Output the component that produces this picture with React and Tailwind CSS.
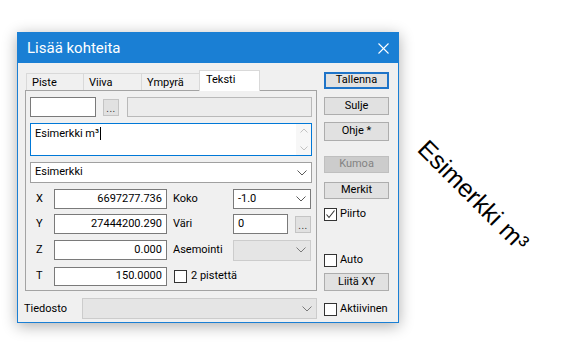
import React from "react";

const Chevron = ({ color = "#5a5a5a" }) => (
  <svg width="10" height="6" viewBox="0 0 10 6" className="shrink-0">
    <polyline points="0.5,0.5 5,5 9.5,0.5" fill="none" stroke={color} strokeWidth="1" />
  </svg>
);

const Check = ({ checked }) => (
  <div className="w-[13px] h-[13px] border border-[#333333] bg-white flex items-center justify-center shrink-0">
    {checked && (
      <svg width="11" height="11" viewBox="0 0 11 11">
        <polyline points="1.5,5.5 4,8.5 9.5,1.5" fill="none" stroke="#333333" strokeWidth="1.1" />
      </svg>
    )}
  </div>
);

const Btn = ({ children, className = "", disabled = false, primary = false }) => (
  <div
    className={
      "w-[65px] flex items-center justify-center " +
      (primary
        ? "border-2 border-[#1f74c8] bg-[#e1e1e1] text-black "
        : disabled
        ? "border border-[#bfbfbf] bg-[#cccccc] text-[#838383] "
        : "border border-[#adadad] bg-[#e1e1e1] text-black ") +
      className
    }
  >
    {children}
  </div>
);

const Dots = ({ className = "" }) => (
  <div
    className={
      "w-[16px] h-[17px] border border-[#c4c4c4] bg-[#e1e1e1] flex items-end justify-center pb-[1px] text-[10px] leading-none text-[#333] tracking-[0.5px] " +
      className
    }
  >
    ...
  </div>
);

export default function App() {
  return (
    <div
      className="w-[564px] h-[353px] bg-white flex text-[11px] text-black overflow-hidden"
      style={{ fontFamily: "Roboto, 'Noto Sans', sans-serif" }}
    >
      {/* Dialog window */}
      <div className="ml-[17px] mt-[32px] w-[382px] h-[291px] shrink-0 border border-[#1a7fd4] bg-[#f0f0f0] flex flex-col shadow-[0_3px_14px_rgba(0,0,0,0.32)]">
        {/* Title bar */}
        <div className="h-[30px] bg-[#1a7fd4] flex items-center pl-[9px] pr-[9px] text-white shrink-0">
          <span className="text-[15px] leading-none">Lisää kohteita</span>
          <svg width="11" height="11" viewBox="0 0 11 11" className="ml-auto">
            <line x1="0.5" y1="0.5" x2="10.5" y2="10.5" stroke="white" strokeWidth="1.1" />
            <line x1="10.5" y1="0.5" x2="0.5" y2="10.5" stroke="white" strokeWidth="1.1" />
          </svg>
        </div>

        {/* Body */}
        <div className="flex pl-[7px]">
          {/* Left column */}
          <div className="w-[292px] flex flex-col">
            {/* Tabs */}
            <div className="mt-[7px] h-[20px] flex items-end pl-[1px]">
              <div className="w-[57px] h-[17px] border-t border-l border-[#d9d9d9] bg-[#f0f0f0] pl-[5px] leading-[18px]">Piste</div>
              <div className="w-[58px] h-[17px] border-t border-l border-[#d9d9d9] bg-[#f0f0f0] pl-[5px] leading-[18px]">Viiva</div>
              <div className="w-[58px] h-[17px] border-t border-l border-[#d9d9d9] bg-[#f0f0f0] pl-[5px] leading-[18px]">Ympyrä</div>
              <div className="relative z-10 w-[61px] h-[21px] mb-[-1px] border-t border-l border-r border-[#d9d9d9] bg-white pl-[6px] leading-[17px]">Teksti</div>
            </div>

            {/* Tab panel */}
            <div className="h-[201px] border border-[#a3a3a3] pl-[4px] pr-[4px] pt-[6px] flex flex-col">
              {/* Row 1 */}
              <div className="flex items-center h-[20px]">
                <div className="w-[66px] h-[20px] border border-[#7a7a7a] bg-white" />
                <Dots className="ml-[7px]" />
                <div className="ml-[8px] flex-1 h-[20px] border border-[#b9b9b9] bg-[#ececec]" />
              </div>

              {/* Text area */}
              <div className="mt-[6px] h-[33px] border border-[#0078d7] bg-white flex">
                <div className="flex-1 pl-[4px] pt-[3px] leading-[14px] flex items-start">
                  <span>Esimerkki m³</span>
                  <span className="ml-[1px] w-[1px] h-[13px] bg-black" />
                </div>
                <div className="w-[15px] flex flex-col items-center justify-between py-[4px] bg-[#f7f7f7]">
                  <svg width="8" height="5" viewBox="0 0 8 5">
                    <polyline points="0.5,4.5 4,1 7.5,4.5" fill="none" stroke="#c2c2c2" strokeWidth="1" />
                  </svg>
                  <svg width="8" height="5" viewBox="0 0 8 5">
                    <polyline points="0.5,0.5 4,4 7.5,0.5" fill="none" stroke="#c2c2c2" strokeWidth="1" />
                  </svg>
                </div>
              </div>

              {/* Combo */}
              <div className="mt-[6px] h-[21px] border border-[#a0a0a0] bg-white flex items-center pl-[4px] pr-[4px]">
                <span>Esimerkki</span>
                <span className="ml-auto"><Chevron /></span>
              </div>

              {/* X */}
              <div className="mt-[6px] h-[20px] flex items-center">
                <span className="w-[24px] pl-[6px]">X</span>
                <div className="w-[113px] h-[20px] border border-[#7a7a7a] bg-white flex items-center justify-end pr-[4px]">6697277.736</div>
                <span className="w-[66px] pl-[6px]">Koko</span>
                <div className="w-[78px] h-[20px] border border-[#7a7a7a] bg-white flex items-center pl-[4px] pr-[4px]">
                  <span>-1.0</span>
                  <span className="ml-auto"><Chevron /></span>
                </div>
              </div>

              {/* Y */}
              <div className="mt-[5px] h-[20px] flex items-center">
                <span className="w-[24px] pl-[6px]">Y</span>
                <div className="w-[113px] h-[20px] border border-[#7a7a7a] bg-white flex items-center justify-end pr-[4px]">27444200.290</div>
                <span className="w-[66px] pl-[6px]">Väri</span>
                <div className="w-[55px] h-[20px] border border-[#7a7a7a] bg-white flex items-center pl-[4px]">0</div>
                <Dots className="ml-[7px]" />
              </div>

              {/* Z */}
              <div className="mt-[6px] h-[20px] flex items-center">
                <span className="w-[24px] pl-[6px]">Z</span>
                <div className="w-[113px] h-[20px] border border-[#7a7a7a] bg-white flex items-center justify-end pr-[4px]">0.000</div>
                <span className="w-[66px] pl-[6px]">Asemointi</span>
                <div className="w-[78px] h-[21px] border border-[#cccccc] bg-[#e5e5e5] flex items-center pr-[4px]">
                  <span className="ml-auto"><Chevron color="#7a7a7a" /></span>
                </div>
              </div>

              {/* T */}
              <div className="mt-[7px] h-[19px] flex items-center">
                <span className="w-[24px] pl-[6px]">T</span>
                <div className="w-[113px] h-[19px] border border-[#7a7a7a] bg-white flex items-center justify-end pr-[4px]">150.0000</div>
                <div className="ml-[7px]"><Check /></div>
                <span className="ml-[4px]">2 pistettä</span>
              </div>
            </div>

            {/* Tiedosto */}
            <div className="mt-[7px] h-[21px] flex items-center">
              <span className="w-[59px] ml-[-1px] pt-[2px]">Tiedosto</span>
              <div className="w-[235px] shrink-0 h-[21px] border border-[#cccccc] bg-[#e5e5e5] flex items-center pr-[4px]">
                <span className="ml-auto"><Chevron color="#7a7a7a" /></span>
              </div>
            </div>
          </div>

          {/* Right column */}
          <div className="ml-[7px] w-[66px] flex flex-col">
            <Btn primary className="mt-[9px] h-[17px]">Tallenna</Btn>
            <Btn className="mt-[8px] h-[18px]">Sulje</Btn>
            <Btn className="mt-[7px] h-[19px]">Ohje *</Btn>
            <Btn disabled className="mt-[15px] h-[17px]">Kumoa</Btn>
            <Btn className="mt-[9px] h-[17px]">Merkit</Btn>
            <div className="mt-[9px] h-[13px] flex items-center">
              <Check checked />
              <span className="ml-[3px]">Piirto</span>
            </div>
            <div className="mt-[33px] h-[13px] flex items-center">
              <Check />
              <span className="ml-[3px]">Auto</span>
            </div>
            <Btn className="mt-[6px] h-[18px]">Liitä XY</Btn>
            <div className="mt-[12px] h-[13px] flex items-center">
              <Check />
              <span className="ml-[3px]">Aktiivinen</span>
            </div>
          </div>
        </div>
      </div>

      {/* Rotated preview text */}
      <div className="flex-1 flex items-center justify-center pr-[17px] pt-[37px]">
        <div
          className="rotate-[45deg] whitespace-nowrap text-[25px] leading-none text-black"
          style={{ fontFamily: "'Liberation Sans', Arial, sans-serif" }}
        >
          Esimerkki m³
        </div>
      </div>
    </div>
  );
}
